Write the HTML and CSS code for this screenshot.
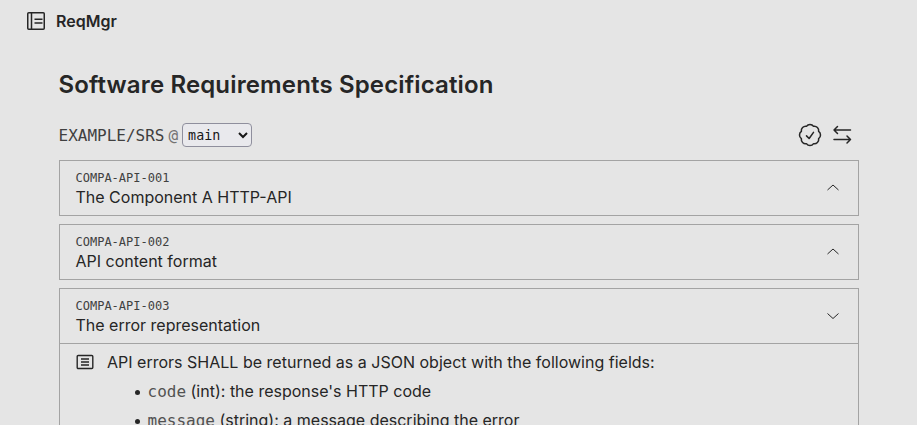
FILE: index.html
```html
<!DOCTYPE html>
<html lang="en">
<head>
    <meta charset="UTF-8">
    <meta name="viewport" content="width=device-width, initial-scale=1.0">
    <title>ReqMgr</title>
    <link rel="stylesheet" href="styles.css">
</head>
<body>

    <header class="top-bar">
        <svg class="brand-icon" viewBox="0 0 18 18" fill="none" stroke="currentColor" stroke-width="1.5" stroke-linejoin="round">
            <rect x="0.75" y="0.75" width="16.5" height="16.5" rx="1"/>
            <path d="M4.5 0.75v16.5"/>
            <path d="M7.5 7.3h8M7.5 11h8"/>
        </svg>
        <span class="brand-name">ReqMgr</span>
    </header>

    <main class="content">
        <h1 class="page-title">Software Requirements Specification</h1>

        <div class="doc-bar">
            <div class="doc-ref">
                <span class="doc-name">EXAMPLE/SRS</span>
                <span class="doc-at">@</span>
                <select class="doc-version">
                    <option>main</option>
                </select>
            </div>
            <div class="doc-actions">
                <svg class="badge-icon" viewBox="0 0 24 24" fill="none" stroke="currentColor" stroke-width="1.3" stroke-linecap="round" stroke-linejoin="round">
                    <path d="M9 12.75 11.25 15 15 9.75M21 12c0 1.268-.63 2.39-1.593 3.068a3.745 3.745 0 0 1-1.043 3.296 3.745 3.745 0 0 1-3.296 1.043A3.745 3.745 0 0 1 12 21c-1.268 0-2.39-.63-3.068-1.593a3.746 3.746 0 0 1-3.296-1.043 3.745 3.745 0 0 1-1.043-3.296A3.745 3.745 0 0 1 3 12c0-1.268.63-2.39 1.593-3.068a3.745 3.745 0 0 1 1.043-3.296 3.746 3.746 0 0 1 3.296-1.043A3.746 3.746 0 0 1 12 3c1.268 0 2.39.63 3.068 1.593a3.746 3.746 0 0 1 3.296 1.043 3.746 3.746 0 0 1 1.043 3.296A3.745 3.745 0 0 1 21 12Z"/>
                </svg>
                <svg class="swap-icon" viewBox="0 0 24 24" fill="none" stroke="currentColor" stroke-width="1.5" stroke-linecap="round" stroke-linejoin="round">
                    <path d="M20.5 7H4M7.5 3.5L4 7l3.5 3.5"/>
                    <path d="M4 16.5H20.5M17 13l3.5 3.5L17 20"/>
                </svg>
            </div>
        </div>

        <section class="req-card">
            <div class="req-head">
                <div>
                    <div class="req-id">COMPA-API-001</div>
                    <div class="req-title">The Component A HTTP-API</div>
                </div>
                <svg class="chevron" viewBox="0 0 14 14" fill="none" stroke="currentColor"><path d="M1.5 9L7 4l5.5 5"/></svg>
            </div>
        </section>

        <section class="req-card">
            <div class="req-head">
                <div>
                    <div class="req-id">COMPA-API-002</div>
                    <div class="req-title">API content format</div>
                </div>
                <svg class="chevron" viewBox="0 0 14 14" fill="none" stroke="currentColor"><path d="M1.5 9L7 4l5.5 5"/></svg>
            </div>
        </section>

        <section class="req-card">
            <div class="req-head open">
                <div>
                    <div class="req-id">COMPA-API-003</div>
                    <div class="req-title">The error representation</div>
                </div>
                <svg class="chevron" viewBox="0 0 14 14" fill="none" stroke="currentColor"><path d="M1.5 4.5L7 9.5l5.5-5"/></svg>
            </div>
            <div class="req-body">
                <svg class="body-icon" viewBox="0 0 18 18" fill="none" stroke="currentColor" stroke-width="1.4" stroke-linejoin="round">
                    <rect x="1.2" y="2.5" width="15.6" height="13" rx="1"/>
                    <path d="M5 6h8M5 9h8M5 12h8" stroke-width="1.3"/>
                </svg>
                <div class="body-text">
                    <p>API errors SHALL be returned as a JSON object with the following fields:</p>
                    <ul class="field-list">
                        <li><code>code</code> (int): the response's HTTP code</li>
                        <li><code>message</code> (string): a message describing the error</li>
                    </ul>
                </div>
            </div>
        </section>
    </main>

</body>
</html>
```

FILE: styles.css
```css
html {
    overflow: hidden;
    height: 425px;
}

body {
    margin: 0;
    background-color: #e5e5e5;
    color: #262626;
    font-family: "Inter", sans-serif;
}

/* Top bar */
.top-bar {
    display: flex;
    align-items: center;
    gap: 11px;
    height: 42px;
    padding: 0 27px;
}

.brand-icon {
    width: 18px;
    height: 18px;
}

.brand-name {
    font-size: 16px;
    font-weight: 600;
}

/* Main column */
.content {
    width: 800px;
    margin: 0 auto;
    padding-top: 27px;
}

.page-title {
    margin: 0 0 22px 0;
    font-size: 24px;
    line-height: 32px;
    font-weight: 600;
    letter-spacing: 0.14px;
}

.doc-bar {
    display: flex;
    justify-content: space-between;
    align-items: center;
    height: 24px;
    margin-bottom: 13px;
}

.doc-ref {
    display: flex;
    align-items: center;
    gap: 4px;
    font-family: "DejaVu Sans Mono", monospace;
}

.doc-name {
    font-size: 16px;
    color: #404040;
}

.doc-at {
    font-size: 16px;
    color: #737373;
}

.doc-version {
    font-family: "DejaVu Sans Mono", monospace;
    font-size: 13.33px;
    height: 24px;
    width: 70px;
    padding: 0 1px;
    color: #171717;
    background-color: #e9e9ed;
    border: 1px solid #8f8f9d;
    border-radius: 4px;
}

.doc-actions {
    display: flex;
    align-items: center;
    gap: 6px;
    padding-right: 5px;
}

.badge-icon {
    width: 28px;
    height: 28px;
}

.swap-icon {
    width: 24px;
    height: 24px;
}

/* Requirement cards */
.req-card {
    border: 1px solid #a3a3a3;
    margin-bottom: 8px;
}

.req-head {
    display: flex;
    justify-content: space-between;
    height: 54px;
    padding: 10px 17.5px 0 16px;
    box-sizing: border-box;
}

.req-head.open {
    height: 55px;
    border-bottom: 1px solid #a3a3a3;
}

.req-id {
    font-family: "DejaVu Sans Mono", monospace;
    font-size: 12px;
    line-height: 14px;
    color: #404040;
}

.req-title {
    font-size: 16px;
    line-height: 24px;
}

.chevron {
    width: 14px;
    height: 14px;
    margin-top: 10px;
}

.req-body {
    display: flex;
    gap: 13.5px;
    padding: 6px 16px;
}

.body-icon {
    flex: none;
    width: 18px;
    height: 18px;
    margin-top: 3px;
}

.body-text {
    font-size: 16px;
    line-height: 24px;
}

.body-text p {
    margin: 0;
    letter-spacing: 0.01px;
}

.field-list {
    margin: 5px 0 0 0;
    padding-left: 40.5px;
    list-style: none;
}

.field-list li {
    margin-bottom: 4px;
}

.field-list li::before {
    content: "";
    display: inline-block;
    width: 5px;
    height: 5px;
    margin-left: -13px;
    margin-right: 8px;
    vertical-align: 2px;
    border-radius: 50%;
    background-color: #262626;
}

.field-list code {
    font-family: "DejaVu Sans Mono", monospace;
    font-size: 16px;
    color: #525252;
}
```
